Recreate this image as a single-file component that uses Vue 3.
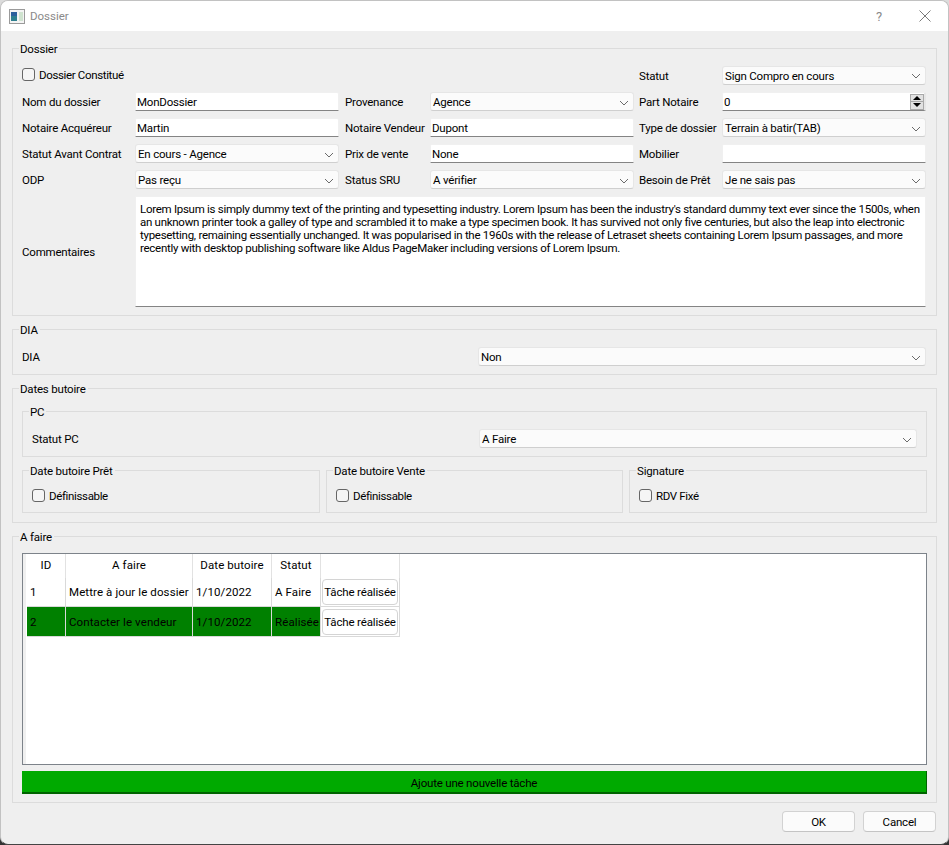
<script setup>
const lorem = [
  "Lorem Ipsum is simply dummy text of the printing and typesetting industry. Lorem Ipsum has been the industry's standard dummy text ever since the 1500s, when",
  "an unknown printer took a galley of type and scrambled it to make a type specimen book. It has survived not only five centuries, but also the leap into electronic",
  "typesetting, remaining essentially unchanged. It was popularised in the 1960s with the release of Letraset sheets containing Lorem Ipsum passages, and more",
  "recently with desktop publishing software like Aldus PageMaker including versions of Lorem Ipsum."
]
const rows = [
  { id: 1, task: 'Mettre à jour le dossier', date: '1/10/2022', status: 'A Faire', done: false },
  { id: 2, task: 'Contacter le vendeur', date: '1/10/2022', status: 'Réalisée', done: true }
]
const chevron = 'M1 1 L5 5 L9 1'
</script>

<template>
  <div class="desk">
    <div class="win">
      <header class="titlebar">
        <svg class="appicon" width="16" height="15" viewBox="0 0 16 15">
          <rect x="0.5" y="0.5" width="15" height="14" fill="#f4f4f4" stroke="#9a9a9a" />
          <rect x="2" y="3" width="6" height="9" fill="#2f7f8f" />
          <rect x="2" y="3" width="6" height="4" fill="#2c5f9c" />
          <rect x="10" y="3" width="4" height="9" fill="#cfe3cf" />
        </svg>
        <span class="wintitle">Dossier</span>
        <span class="help">?</span>
        <svg class="close" width="12" height="12" viewBox="0 0 12 12">
          <path d="M0.5 0.5 L11.5 11.5 M11.5 0.5 L0.5 11.5" stroke="#7a7a7a" stroke-width="1" fill="none" />
        </svg>
      </header>

      <main class="content">
        <section class="group g-dossier">
          <span class="legend">Dossier</span>
          <div class="form">
            <label class="check span4"><span class="box"></span><span class="txt">Dossier Constitué</span></label>
            <span class="lbl l3">Statut</span>
            <div class="combo"><span>Sign Compro en cours</span><svg width="10" height="6" viewBox="0 0 10 6"><path :d="chevron" /></svg></div>

            <span class="lbl">Nom du dossier</span>
            <div class="edit">MonDossier</div>
            <span class="lbl">Provenance</span>
            <div class="combo"><span>Agence</span><svg width="10" height="6" viewBox="0 0 10 6"><path :d="chevron" /></svg></div>
            <span class="lbl l3">Part Notaire</span>
            <div class="edit spin">
              <span class="txt">0</span>
              <div class="spinbtns">
                <span class="up"></span>
                <span class="down"></span>
              </div>
            </div>

            <span class="lbl">Notaire Acquéreur</span>
            <div class="edit">Martin</div>
            <span class="lbl">Notaire Vendeur</span>
            <div class="edit">Dupont</div>
            <span class="lbl l3">Type de dossier</span>
            <div class="combo"><span>Terrain à batir(TAB)</span><svg width="10" height="6" viewBox="0 0 10 6"><path :d="chevron" /></svg></div>

            <span class="lbl">Statut Avant Contrat</span>
            <div class="combo"><span>En cours - Agence</span><svg width="10" height="6" viewBox="0 0 10 6"><path :d="chevron" /></svg></div>
            <span class="lbl">Prix de vente</span>
            <div class="edit">None</div>
            <span class="lbl l3">Mobilier</span>
            <div class="edit"></div>

            <span class="lbl">ODP</span>
            <div class="combo"><span>Pas reçu</span><svg width="10" height="6" viewBox="0 0 10 6"><path :d="chevron" /></svg></div>
            <span class="lbl">Status SRU</span>
            <div class="combo"><span>A vérifier</span><svg width="10" height="6" viewBox="0 0 10 6"><path :d="chevron" /></svg></div>
            <span class="lbl l3">Besoin de Prêt</span>
            <div class="combo"><span>Je ne sais pas</span><svg width="10" height="6" viewBox="0 0 10 6"><path :d="chevron" /></svg></div>

            <span class="lbl comment-lbl">Commentaires</span>
            <div class="memo">
              <div v-for="(line, i) in lorem" :key="i">{{ line }}</div>
            </div>
          </div>
        </section>

        <section class="group g-dia">
          <span class="legend">DIA</span>
          <div class="pair">
            <span class="lbl">DIA</span>
            <div class="combo"><span>Non</span><svg width="10" height="6" viewBox="0 0 10 6"><path :d="chevron" /></svg></div>
          </div>
        </section>

        <section class="group g-dates">
          <span class="legend">Dates butoire</span>
          <section class="group g-pc">
            <span class="legend">PC</span>
            <div class="pair">
              <span class="lbl">Statut PC</span>
              <div class="combo"><span>A Faire</span><svg width="10" height="6" viewBox="0 0 10 6"><path :d="chevron" /></svg></div>
            </div>
          </section>
          <div class="three">
            <section class="group g-small">
              <span class="legend">Date butoire Prêt</span>
              <label class="check"><span class="box"></span><span class="txt">Définissable</span></label>
            </section>
            <section class="group g-small">
              <span class="legend">Date butoire Vente</span>
              <label class="check"><span class="box"></span><span class="txt">Définissable</span></label>
            </section>
            <section class="group g-small">
              <span class="legend">Signature</span>
              <label class="check"><span class="box"></span><span class="txt">RDV Fixé</span></label>
            </section>
          </div>
        </section>

        <section class="group g-todo">
          <span class="legend">A faire</span>
          <div class="tableview">
            <table>
              <colgroup>
                <col class="c-id" /><col class="c-task" /><col class="c-date" /><col class="c-status" /><col class="c-btn" />
              </colgroup>
              <thead>
                <tr><th>ID</th><th>A faire</th><th>Date butoire</th><th>Statut</th><th></th></tr>
              </thead>
              <tbody>
                <tr v-for="r in rows" :key="r.id" :class="{ done: r.done }">
                  <td>{{ r.id }}</td>
                  <td>{{ r.task }}</td>
                  <td>{{ r.date }}</td>
                  <td>{{ r.status }}</td>
                  <td class="btncell"><button class="rowbtn">Tâche réalisée</button></td>
                </tr>
              </tbody>
            </table>
          </div>
          <button class="addbtn">Ajoute une nouvelle tâche</button>
        </section>

        <footer class="actions">
          <button class="dlgbtn">OK</button>
          <button class="dlgbtn">Cancel</button>
        </footer>
      </main>
    </div>
  </div>
</template>

<style>
html, body { margin: 0; padding: 0; background: #3a3a3a; }
</style>

<style scoped>
.desk {
  width: 949px;
  height: 845px;
  background: linear-gradient(#dcdcdc 0 60%, #333 60%);
  font-family: Roboto, "Open Sans", sans-serif;
  font-size: 11.5px;
  letter-spacing: -0.2px;
  line-height: 13px;
  color: #000;
  overflow: hidden;
}
.win {
  box-sizing: border-box;
  width: 949px;
  height: 845px;
  background: #efefef;
  border: 1px solid #c2c2c2;
  border-bottom-color: #444;
  border-radius: 8px;
  overflow: hidden;
  display: flex;
  flex-direction: column;
}
.titlebar {
  height: 30px;
  flex: none;
  background: #fff;
  display: flex;
  align-items: center;
  padding: 0 17px 0 8px;
}
.appicon { flex: none; }
.wintitle { margin-left: 5px; color: #8a8a8a; font-size: 11.5px; letter-spacing: 0; }
.help { margin-left: auto; margin-right: 37px; color: #8a8a8a; font-size: 13px; }
.close { flex: none; }

.content { padding: 17px 11px 0 11px; flex: 1; display: flex; flex-direction: column; }

.group {
  position: relative;
  box-sizing: border-box;
  border: 1px solid #dcdcdc;
}
.legend {
  position: absolute;
  left: 6px;
  top: -6px;
  padding: 0 2px 0 1px;
  height: 12px;
  background: #efefef;
}
.g-dossier { height: 268px; padding: 16px 10px 0 9px; }
.g-dia { height: 46px; margin-top: 13px; padding: 17px 10px 0 9px; }
.g-dates { height: 135px; margin-top: 13px; padding: 22px 9px 0 9px; }
.g-pc { height: 46px; padding: 17px 9px 0 9px; }
.g-todo { height: 267px; margin-top: 13px; padding: 16px 9px 0 9px; }

.form {
  display: grid;
  grid-template-columns: 107px 204px 79px 204px 76px 204px;
  grid-template-rows: 20px 19px 19px 19px 19px 111px;
  column-gap: 6px;
  row-gap: 7px;
  align-items: center;
}
.span4 { grid-column: span 4; }
.lbl { white-space: nowrap; padding-top: 2px; }
.l3 { margin-left: -1px; }
.comment-lbl { align-self: center; }

.check { display: flex; align-items: center; letter-spacing: -0.35px; }
.txt { padding-top: 2px; }
.box {
  box-sizing: border-box;
  width: 13px;
  height: 13px;
  flex: none;
  margin-right: 4px;
  border: 1px solid #666;
  border-radius: 3px;
  background: #f5f5f5;
}
.form .check { margin-top: -2px; }

.combo {
  box-sizing: border-box;
  height: 19px;
  display: flex;
  align-items: center;
  justify-content: space-between;
  padding: 2px 4px 0 2px;
  background: #fbfbfb;
  border: 1px solid #e6e6e6;
  border-bottom-color: #cfcfcf;
  border-radius: 3px;
}
.combo svg { flex: none; }
.combo path { fill: none; stroke: #6b6b6b; stroke-width: 1; }

.edit {
  box-sizing: border-box;
  height: 19px;
  display: flex;
  align-items: center;
  padding: 2px 1px 0;
  background: #fff;
  border: 1px solid #f0f0f0;
  border-bottom: 1px solid #848484;
  border-radius: 2px 2px 0 0;
}
.spin { justify-content: space-between; padding-top: 0; padding-right: 0; border-right: 2px solid #e6e6e6; }
.spinbtns { display: flex; flex-direction: column; width: 14px; height: 16px; flex: none; }
.spinbtns span {
  box-sizing: border-box;
  flex: 1;
  background: #e1e1e1;
  border: 1px solid #a8a8a8;
  display: flex;
  align-items: center;
  justify-content: center;
}
.spinbtns span + span { border-top: 0; }
.spinbtns .up::before {
  content: "";
  border-left: 4px solid transparent;
  border-right: 4px solid transparent;
  border-bottom: 4px solid #000;
}
.spinbtns .down::before {
  content: "";
  border-left: 4px solid transparent;
  border-right: 4px solid transparent;
  border-top: 4px solid #000;
}

.memo {
  box-sizing: border-box;
  grid-column: span 5;
  height: 111px;
  margin-top: -1px;
  padding: 6px 4px 0;
  background: #fff;
  border: 1px solid #f0f0f0;
  border-bottom: 1px solid #848484;
  white-space: nowrap;
  letter-spacing: -0.28px;
}

.pair { display: grid; grid-template-columns: 1fr 448px; align-items: center; }
.g-pc .pair { grid-template-columns: 1fr 438px; }

.three { display: grid; grid-template-columns: 298px 297px 298px; column-gap: 6px; margin-top: 13px; }
.g-small { height: 43px; padding: 17px 9px 0 9px; }

.tableview {
  box-sizing: border-box;
  height: 212px;
  background: linear-gradient(90deg, #f0f0f0 3px, #fff 3px);
  border: 1px solid #7d838a;
}
table {
  table-layout: fixed;
  width: 373px;
  margin-left: 4px;
  border-collapse: separate;
  border-spacing: 0;
  font-size: inherit;
  letter-spacing: 0.1px;
}
.c-id { width: 39px; }
.c-task { width: 127px; }
.c-date { width: 79px; }
.c-status { width: 49px; }
.c-btn { width: 79px; }
th {
  box-sizing: border-box;
  height: 24px;
  font-weight: 400;
  text-align: center;
  padding: 0 0 1px;
  background: #fff;
  border-right: 1px solid #e2e2e2;
  white-space: nowrap;
}
td {
  height: 29px;
  padding: 0 3px;
  box-sizing: border-box;
  background: #fff;
  border-right: 1px solid #d9d9d9;
  border-bottom: 1px solid #d9d9d9;
  white-space: nowrap;
  overflow: hidden;
}
tr.done td { background: #008000; height: 30px; padding-top: 1px; }
td.btncell, tr.done td.btncell { background: #fff; padding-left: 1px; padding-right: 1px; }
.rowbtn {
  display: block;
  box-sizing: border-box;
  width: 76px;
  height: 26px;
  padding: 0;
  font: inherit;
  letter-spacing: -0.15px;
  color: #000;
  background: #fff;
  border: 1px solid #d4d4d4;
  border-radius: 4px;
  white-space: nowrap;
}
.addbtn {
  display: block;
  box-sizing: border-box;
  width: 905px;
  height: 23px;
  margin-top: 6px;
  padding: 3px 0 0;
  font: inherit;
  letter-spacing: inherit;
  color: #000;
  background: #00aa00;
  border: 0;
  border-right: 1px solid #006400;
  border-bottom: 2px solid #006400;
}
.actions {
  display: flex;
  justify-content: flex-end;
  gap: 8px;
  margin-top: 8px;
  margin-right: 1px;
}
.dlgbtn {
  box-sizing: border-box;
  width: 73px;
  height: 21px;
  padding: 1px 0 0;
  font: inherit;
  letter-spacing: inherit;
  color: #000;
  background: #fbfbfb;
  border: 1px solid #d2d2d2;
  border-bottom-color: #c4c4c4;
  border-radius: 4px;
}
</style>
